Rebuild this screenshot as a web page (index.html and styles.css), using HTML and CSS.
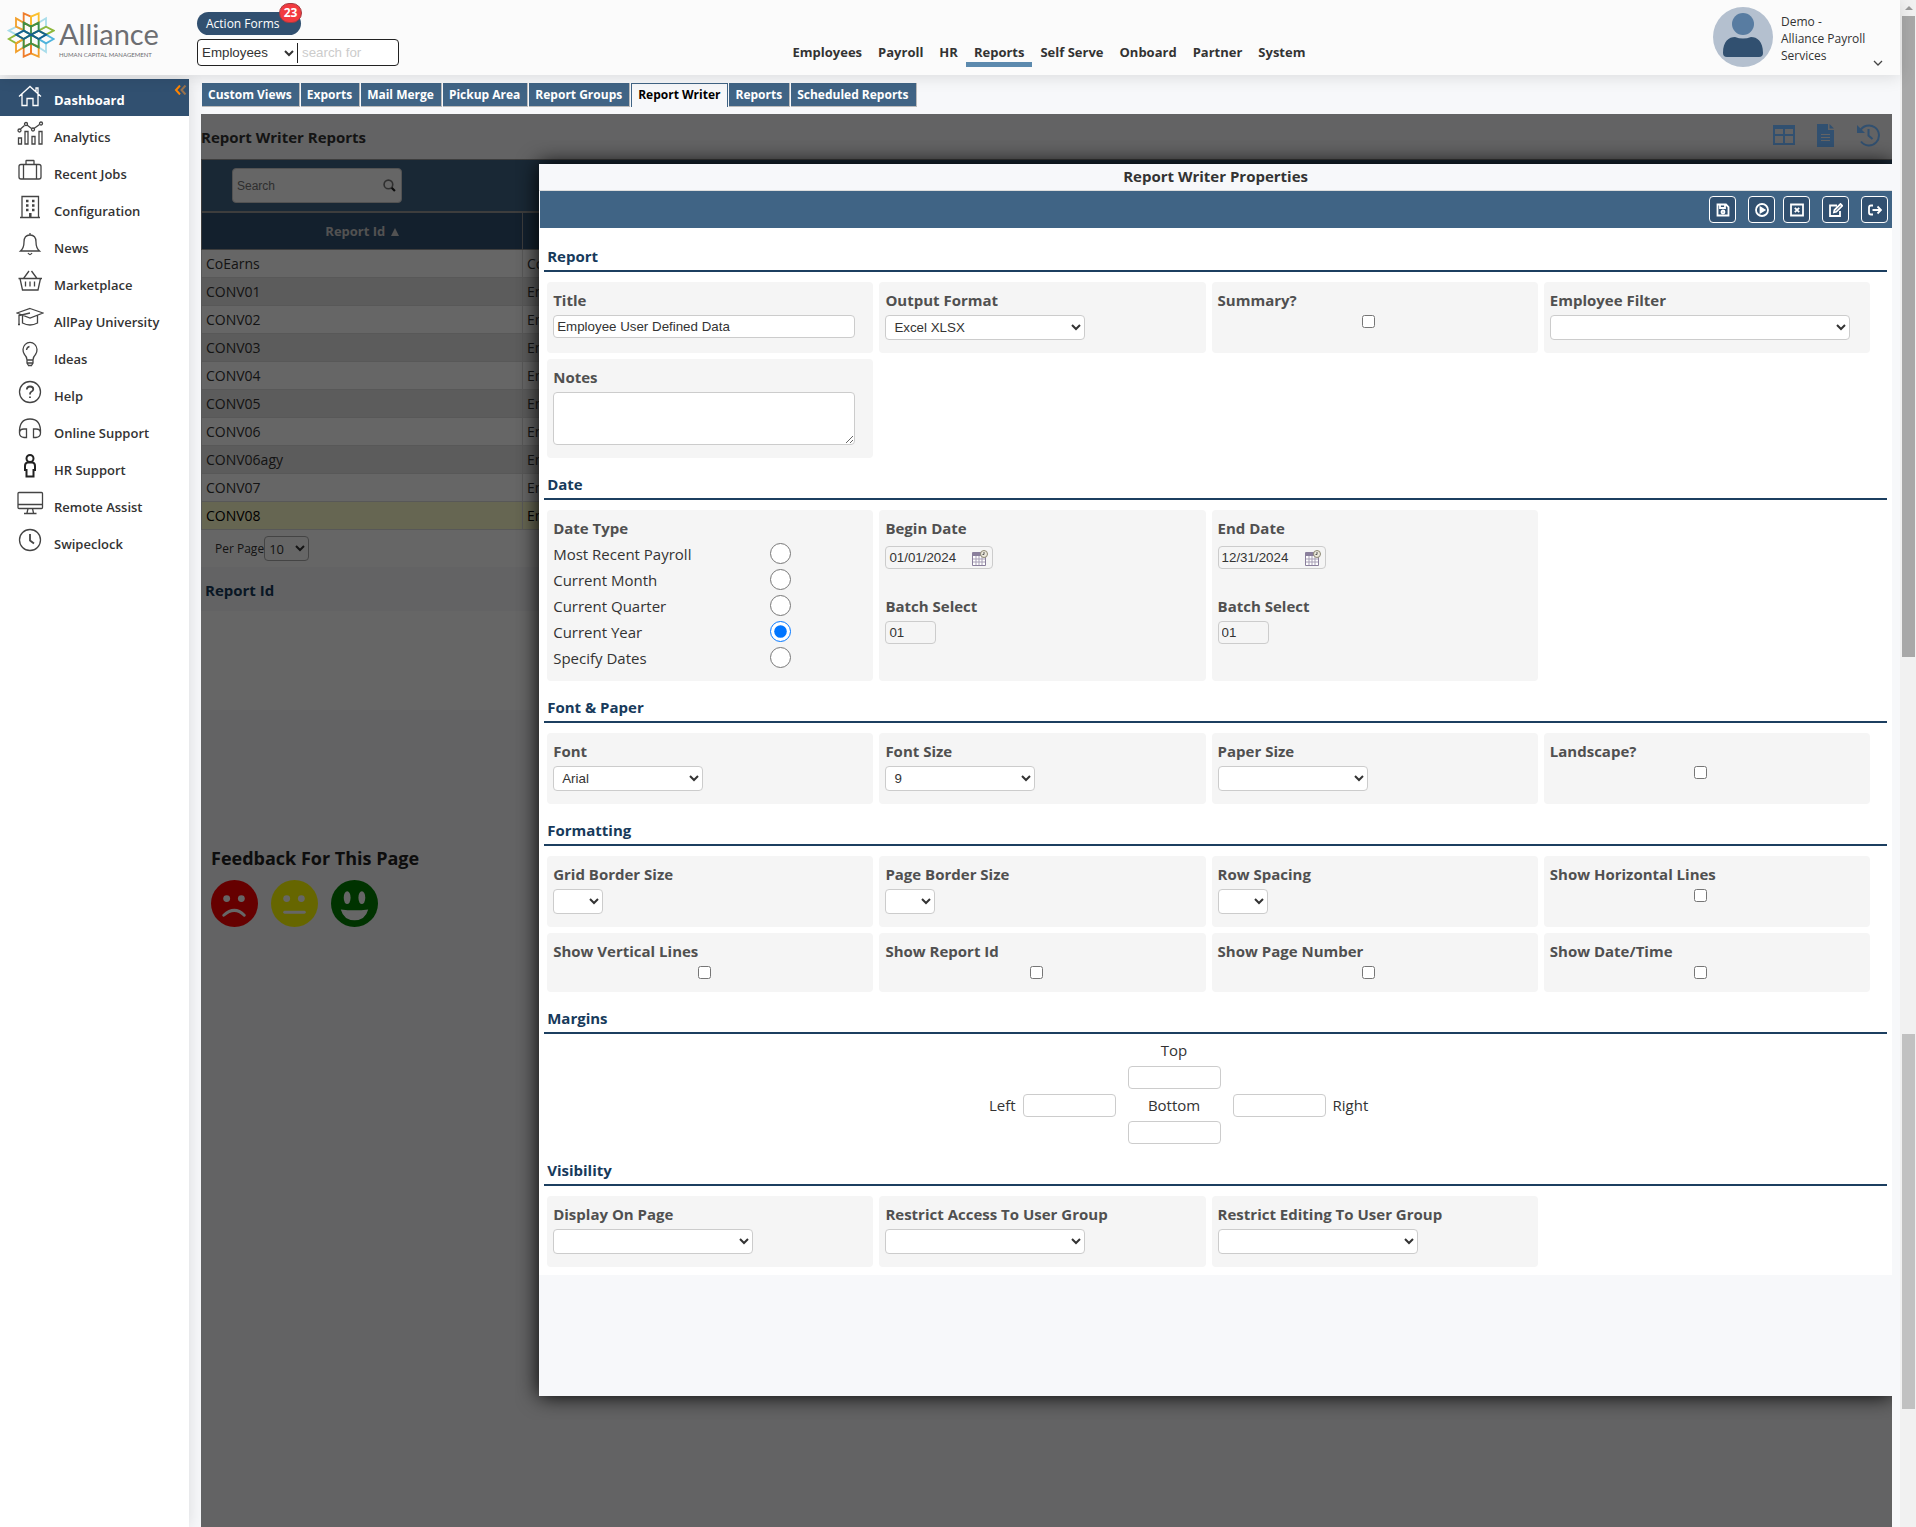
FILE: index.html
```html
<!DOCTYPE html>
<html lang="en">
<head>
<meta charset="utf-8">
<title>Report Writer Properties</title>
<link rel="stylesheet" href="styles.css">
</head>
<body>
<div class="window">
<div class="app">
  <header class="topbar">
    <a class="logo" href="#" aria-label="Alliance Human Capital Management">
      <svg class="logo-mark" viewBox="20 36 144 138" fill="none" stroke-width="5.500">
        <path stroke="#a9ddeb" d="M25 92L48 80 70 92 48 104ZM137 55L115 68V90L137 80ZM137 156L115 142V117L137 130Z"/>
        <path stroke="#8fb93c" d="M25 117L48 104 70 117 48 130ZM160 92L137 80 115 92 137 104Z"/>
        <path stroke="#4fb3dc" d="M160 117L137 104 115 117 137 130Z"/>
        <path stroke="#f2a02c" d="M47 55L70 68V90L47 80ZM47 156L70 142V117L47 130ZM92 160L115 170V140L92 130Z"/>
        <path stroke="#ef7d2b" d="M70 40L92 50V80L70 68ZM70 170L92 160V130L70 140Z"/>
        <path stroke="#fbc02d" d="M92 50L115 40V68L92 80Z"/>
        <path stroke="#3f8f45" d="M70 68L92 80V104L70 92ZM115 68L92 80V104L115 92ZM70 142L92 130V104L70 117ZM115 142L92 130V104L115 117Z"/>
        <path stroke="#14608f" d="M48 104L70 92 92 104 70 117ZM137 104L115 92 92 104 115 117Z"/>
      </svg>
      <span class="logo-text"><span class="logo-name">Alliance</span><span class="logo-tag">HUMAN CAPITAL MANAGEMENT</span></span>
    </a>
    <div class="quick">
      <button class="action-forms" type="button">Action Forms<span class="badge">23</span></button>
      <div class="quick-search">
        <select aria-label="Search in"><option>Employees</option></select>
        <input type="text" placeholder="search for" aria-label="Search for">
      </div>
    </div>
    <nav class="mainnav">
      <a href="#">Employees</a><a href="#">Payroll</a><a href="#">HR</a><a href="#" class="current">Reports</a><a href="#">Self Serve</a><a href="#">Onboard</a><a href="#">Partner</a><a href="#">System</a>
    </nav>
    <div class="account">
      <svg class="avatar" viewBox="0 0 60 60"><circle cx="30" cy="30" r="30" fill="#b4c0cf"/><circle cx="30" cy="17" r="11" fill="#587ca1"/><path d="M10 46C10 34 16 30 22 30Q30 33 38 30C44 30 50 34 50 46Q50 50 46 50H14Q10 50 10 46Z" fill="#315070"/></svg>
      <span class="account-name">Demo -<br>Alliance Payroll<br>Services</span>
      <svg class="account-caret" viewBox="0 0 10 6" fill="none" stroke="#444" stroke-width="1.3"><path d="M1 1L5 5 9 1"/></svg>
    </div>
  </header>

  <div class="columns">
    <aside class="sidebar">
      <a href="#" class="current">
        <svg viewBox="0 0 28 28"><path d="M3 14.500L14 4.500 25 14.500M6 12V23.500H11V16.500H17V23.500H22V12M20 9.500V6H22V11"/></svg><span>Dashboard</span>
        <svg class="collapse" viewBox="0 0 12 10"><path d="M5.500 .5L1.500 5 5.500 9.500" stroke="#ff8400"/><path d="M11 .5L7 5 11 9.500" stroke="#9a724d"/></svg>
      </a>
      <a href="#"><svg viewBox="0 0 28 28"><path d="M2.500 19H5.500V25H2.500ZM9 12.500H12V25H9ZM16 17.500H19V25H16ZM23 12.500H26V25H23ZM4.500 10L8.500 6.500M11 6L15.500 9.500M18 9.500L23.500 5.500"/><circle cx="3.500" cy="11.500" r="1.500"/><circle cx="10" cy="5" r="1.500"/><circle cx="17" cy="10.500" r="1.500"/><circle cx="25" cy="4.500" r="1.500"/></svg><span>Analytics</span></a>
      <a href="#"><svg viewBox="0 0 28 28"><rect x="3" y="8.500" width="22" height="14.500" rx="2"/><path d="M10 8.500V5Q10 4.500 10.500 4.500H17.500Q18 4.500 18 5V8.500M7.500 8.500V23M20.500 8.500V23"/></svg><span>Recent Jobs</span></a>
      <a href="#"><svg viewBox="0 0 28 28"><path d="M4 24.500H24M6 24.500V3.500H22.500V24.500"/><path stroke-width="2.500" d="M10 8H12.500M16 8H18.500M10 12.500H12.500M16 12.500H18.500M10 17H12.500M16 17H18.500M14.300 20V24"/></svg><span>Configuration</span></a>
      <a href="#"><svg viewBox="0 0 28 28"><path d="M14 3V5M4.500 21Q8 18 8 12 8 5 14 5 20 5 20 12 20 18 23.500 21ZM12 23Q14 26 16 23"/></svg><span>News</span></a>
      <a href="#"><svg viewBox="0 0 28 28"><path d="M2.500 11.500H26M4 11.500L6.500 23H22L24.500 11.500M7.500 11.500L13 4M21 11.500L15.500 4M9.500 14.500V19.500M14 14.500V19.500M18.500 14.500V19.500"/></svg><span>Marketplace</span></a>
      <a href="#"><svg viewBox="0 0 28 28"><path d="M14 4.500L27 9 14 14 1 9ZM6.500 11.500V19Q14 23 21.500 19V11.500M14 9L3 11.500V20M2 20.500H4"/></svg><span>AllPay University</span></a>
      <a href="#"><svg viewBox="0 0 28 28"><path d="M11 19Q11 16 8.500 13.500A7 7.500 0 1 1 19.500 13.500Q17 16 17 19ZM11 22H17M12 24.500H16M11 19V22L12.500 24.500M17 19V22L15.500 24.500M10.500 9Q11 6 13.500 5.500"/></svg><span>Ideas</span></a>
      <a href="#"><svg viewBox="0 0 28 28"><circle cx="14" cy="14" r="10.500"/><path stroke-width="1.800" d="M10.800 11.500Q11 8.500 14 8.500 17.300 8.500 17.300 11.300 17.300 13 15 14 14 14.600 14 16.500M14 18.500V20"/></svg><span>Help</span></a>
      <a href="#"><svg viewBox="0 0 28 28"><path d="M3.500 18Q3 4 14 4 25 4 24.500 18M10.500 14V22.500H8Q3.500 22 3.500 18 3.500 14 8 14ZM17.500 14V22.500H20Q24.500 22 24.500 18 24.500 14 20 14Z"/></svg><span>Online Support</span></a>
      <a href="#"><svg viewBox="0 0 28 28" class="bold"><circle cx="14" cy="6.500" r="3.500"/><path d="M11.500 10.500H16.500Q19 11 19 14V18H17.500V24.500H10.500V18H9V14Q9 11 11.500 10.500Z"/></svg><span>HR Support</span></a>
      <a href="#"><svg viewBox="0 0 28 28"><rect x="2" y="3.500" width="24.500" height="16" rx="1"/><path d="M2 15.500H26.500M12 19.500L11 24M16.500 19.500L17.500 24M8 24.500H20.500"/></svg><span>Remote Assist</span></a>
      <a href="#"><svg viewBox="0 0 28 28"><circle cx="14" cy="14" r="10.500"/><path stroke-width="1.800" d="M14 8V14.500L18 17.500"/></svg><span>Swipeclock</span></a>
    </aside>

    <main class="main">
      <nav class="tabs">
        <a href="#">Custom Views</a><a href="#">Exports</a><a href="#">Mail Merge</a><a href="#">Pickup Area</a><a href="#">Report Groups</a><a href="#" class="current">Report Writer</a><a href="#">Reports</a><a href="#">Scheduled Reports</a>
      </nav>

      <div class="stage">
        <div class="page-head">
          <h1>Report Writer Reports</h1>
          <div class="page-tools">
            <button type="button" aria-label="Grid"><svg viewBox="0 0 24 24"><path fill="none" stroke="#315070" stroke-width="2" d="M2 3H22V21H2ZM2 12H22M12 4V21"/><path fill="#315070" d="M1 2H23V6H1Z"/></svg></button>
            <button type="button" aria-label="Document"><svg viewBox="0 0 24 24"><path fill="#315070" d="M3 1H14V7H20V24H3ZM15.500 1L20 5.500H15.500Z"/><path stroke="#636364" d="M7 11.500H16M7 14.500H16M7 17.500H16"/></svg></button>
            <button type="button" aria-label="History"><svg viewBox="0 0 24 24" fill="none" stroke="#315070" stroke-width="2"><path d="M4 8A10 10 0 1 1 5 18.500M12.500 6V12.500L16.500 16"/><path fill="#315070" stroke="none" d="M1 2V10H9Z"/></svg></button>
          </div>
        </div>
        <div class="grid-toolbar">
          <div class="grid-search"><input type="text" placeholder="Search" aria-label="Search reports"><svg viewBox="0 0 12 12" fill="none"><circle cx="5" cy="5" r="4" stroke="#777" stroke-width="1.500"/><path d="M8 8L11 11" stroke="#222" stroke-width="2"/></svg></div>
        </div>
        <table class="reports">
          <thead><tr><th class="col-id">Report Id <svg viewBox="0 0 8 8"><path d="M4 0L8 8H0Z" fill="#ccc"/></svg></th><th></th></tr></thead>
          <tbody>
            <tr><td>CoEarns</td><td>Co</td></tr>
            <tr><td>CONV01</td><td>Em</td></tr>
            <tr><td>CONV02</td><td>Em</td></tr>
            <tr><td>CONV03</td><td>Em</td></tr>
            <tr><td>CONV04</td><td>Em</td></tr>
            <tr><td>CONV05</td><td>Em</td></tr>
            <tr><td>CONV06</td><td>Em</td></tr>
            <tr><td>CONV06agy</td><td>Em</td></tr>
            <tr><td>CONV07</td><td>Em</td></tr>
            <tr class="selected"><td>CONV08</td><td>Em</td></tr>
          </tbody>
        </table>
        <div class="pager"><label for="per-page">Per Page</label><select id="per-page"><option>10</option></select></div>
        <h2 class="detail-head">Report Id</h2>
        <div class="detail-body"></div>
        <section class="feedback">
          <h2>Feedback For This Page</h2>
          <div class="faces">
            <button type="button" aria-label="Unhappy"><svg viewBox="0 0 48 48"><circle cx="24" cy="24" r="24" fill="#f00"/><g fill="#fff"><circle cx="16" cy="19" r="3.500"/><circle cx="31" cy="19" r="3.500"/></g><path d="M13 36Q24 26 34 36" fill="none" stroke="#fff" stroke-width="3" stroke-linecap="round"/></svg></button>
            <button type="button" aria-label="Neutral"><svg viewBox="0 0 48 48"><circle cx="24" cy="24" r="24" fill="#ff0"/><g fill="#fff"><circle cx="16" cy="19" r="3.500"/><circle cx="31" cy="19" r="3.500"/></g><path d="M14 33H34" stroke="#fff" stroke-width="3" stroke-linecap="round"/></svg></button>
            <button type="button" aria-label="Happy"><svg viewBox="0 0 48 48"><circle cx="24" cy="24" r="24" fill="#008000"/><g fill="#fff"><ellipse cx="16.500" cy="18" rx="3.500" ry="6.500"/><ellipse cx="31.500" cy="18" rx="3.500" ry="6.500"/><path d="M10 30Q24 32 38 30 35 41 24 41 13 41 10 30Z"/></g></svg></button>
          </div>
        </section>

        <div class="shade"></div>

        <form class="dialog" role="dialog" aria-labelledby="dialog-title">
          <h2 class="dialog-title" id="dialog-title">Report Writer Properties</h2>
          <div class="dialog-bar">
            <button type="button" aria-label="Save"><svg viewBox="0 0 14 14"><path d="M1.500 1.500H10L12.500 4V12.500H1.500ZM4 2V5H9V2"/><circle cx="7" cy="9" r="1.500"/></svg></button>
            <button type="button" aria-label="Run"><svg viewBox="0 0 14 14"><circle cx="7" cy="7" r="6"/><path d="M5.500 4.500L9.500 7 5.500 9.500Z" fill="#fff"/></svg></button>
            <button type="button" class="tight" aria-label="Delete"><svg viewBox="0 0 14 14"><path d="M1 1.500H13V12.500H1ZM4.800 4.800L9.200 9.200M9.200 4.800L4.800 9.200"/></svg></button>
            <button type="button" aria-label="Edit"><svg viewBox="0 0 14 14"><path d="M8 2.500H1V13H11V8M5 9.300L5.500 7 11.500 1 13.300 2.800 7.300 8.800Z"/></svg></button>
            <button type="button" aria-label="Exit"><svg viewBox="0 0 14 14"><path d="M5 2.500H3Q1 2.500 1 4.500V9.500Q1 11.500 3 11.500H5M4.500 7H13M9.500 3.500L13 7 9.500 10.500"/></svg></button>
          </div>

          <div class="dialog-body">
            <h3>Report</h3>
            <div class="cards">
              <div class="card"><label for="title">Title</label><input class="text" id="title" type="text" value="Employee User Defined Data"></div>
              <div class="card"><label for="format">Output Format</label><select class="w-200" id="format"><option>Excel XLSX</option></select></div>
              <div class="card"><label for="summary">Summary?</label><input id="summary" type="checkbox"></div>
              <div class="card"><label for="filter">Employee Filter</label><select class="w-300" id="filter"><option></option></select></div>
              <div class="card"><label for="notes">Notes</label><textarea id="notes"></textarea></div>
            </div>

            <h3>Date</h3>
            <div class="cards">
              <fieldset class="card">
                <legend>Date Type</legend>
                <label class="radio">Most Recent Payroll<input type="radio" name="datetype"></label>
                <label class="radio">Current Month<input type="radio" name="datetype"></label>
                <label class="radio">Current Quarter<input type="radio" name="datetype"></label>
                <label class="radio">Current Year<input type="radio" name="datetype" checked></label>
                <label class="radio">Specify Dates<input type="radio" name="datetype"></label>
              </fieldset>
              <div class="card dates">
                <label for="begin">Begin Date</label>
                <div class="date"><input id="begin" type="text" value="01/01/2024"><svg viewBox="0 0 16 16"><path d="M.5 2.500H13.500V15.500H.5Z" fill="#fff" stroke="#8a7f9c"/><path d="M1 3H13V6H1Z" fill="#8a7f9c"/><path d="M1 9H13M1 12H13M4 6V15M7 6V15M10 6V15" stroke="#a79fb5"/><circle cx="12" cy="4" r="3.500" fill="#ece9dc" stroke="#8d8873"/><path d="M12 2V4.500H10.500" stroke="#555" fill="none"/></svg></div>
                <label for="batch1">Batch Select</label><input class="text batch" id="batch1" type="text" value="01">
              </div>
              <div class="card dates">
                <label for="end">End Date</label>
                <div class="date"><input id="end" type="text" value="12/31/2024"><svg viewBox="0 0 16 16"><path d="M.5 2.500H13.500V15.500H.5Z" fill="#fff" stroke="#8a7f9c"/><path d="M1 3H13V6H1Z" fill="#8a7f9c"/><path d="M1 9H13M1 12H13M4 6V15M7 6V15M10 6V15" stroke="#a79fb5"/><circle cx="12" cy="4" r="3.500" fill="#ece9dc" stroke="#8d8873"/><path d="M12 2V4.500H10.500" stroke="#555" fill="none"/></svg></div>
                <label for="batch2">Batch Select</label><input class="text batch" id="batch2" type="text" value="01">
              </div>
            </div>

            <h3>Font &amp; Paper</h3>
            <div class="cards">
              <div class="card"><label for="font">Font</label><select class="w-150" id="font"><option>Arial</option></select></div>
              <div class="card"><label for="size">Font Size</label><select class="w-150" id="size"><option>9</option></select></div>
              <div class="card"><label for="paper">Paper Size</label><select class="w-150" id="paper"><option></option></select></div>
              <div class="card"><label for="landscape">Landscape?</label><input id="landscape" type="checkbox"></div>
            </div>

            <h3>Formatting</h3>
            <div class="cards">
              <div class="card"><label for="gridborder">Grid Border Size</label><select class="w-50" id="gridborder"><option></option></select></div>
              <div class="card"><label for="pageborder">Page Border Size</label><select class="w-50" id="pageborder"><option></option></select></div>
              <div class="card"><label for="rowspacing">Row Spacing</label><select class="w-50" id="rowspacing"><option></option></select></div>
              <div class="card"><label for="hlines">Show Horizontal Lines</label><input id="hlines" type="checkbox"></div>
              <div class="card"><label for="vlines">Show Vertical Lines</label><input id="vlines" type="checkbox"></div>
              <div class="card"><label for="showid">Show Report Id</label><input id="showid" type="checkbox"></div>
              <div class="card"><label for="pagenum">Show Page Number</label><input id="pagenum" type="checkbox"></div>
              <div class="card"><label for="datetime">Show Date/Time</label><input id="datetime" type="checkbox"></div>
            </div>

            <h3>Margins</h3>
            <div class="margins">
              <label for="m-left">Left</label><input class="text" id="m-left" type="text">
              <div class="margins-mid">
                <label for="m-top">Top</label><input class="text" id="m-top" type="text">
                <label for="m-bottom">Bottom</label><input class="text" id="m-bottom" type="text">
              </div>
              <input class="text" id="m-right" type="text"><label for="m-right">Right</label>
            </div>

            <h3>Visibility</h3>
            <div class="cards">
              <div class="card"><label for="display">Display On Page</label><select class="w-200" id="display"><option></option></select></div>
              <div class="card"><label for="access">Restrict Access To User Group</label><select class="w-200" id="access"><option></option></select></div>
              <div class="card"><label for="editing">Restrict Editing To User Group</label><select class="w-200" id="editing"><option></option></select></div>
            </div>
          </div>
        </form>
      </div>
    </main>
  </div>
</div>
<div class="scrollbar" aria-hidden="true">
  <div class="track upper"><span class="arrow"></span><span class="thumb"></span></div>
  <div class="track lower"><span class="thumb"></span></div>
</div>
</div>
</body>
</html>
```
FILE: styles.css
```css
* { box-sizing: border-box; }
body { margin: 0; background: #f7f8fa; color: #333; font-family: "Open Sans", "Noto Sans", sans-serif; font-size: 14px; }
h1, h2, h3 { margin: 0; font-weight: 700; }
a { color: inherit; text-decoration: none; }
button { font-family: inherit; }
input, select, textarea { font-family: "Liberation Sans", Arial, sans-serif; color: #333; }

.window { display: flex; min-height: 100vh; }
.app { flex: 1; min-width: 0; display: flex; flex-direction: column; }

/* header */
.topbar { display: flex; height: 75px; background: #fbfbfb; box-shadow: 0 2px 16px rgba(0, 0, 0, .12); position: relative; z-index: 2; }
.logo { width: 197px; display: flex; padding: 12px 0 0 7px; gap: 4px; }
.logo-mark { width: 48px; height: 46px; }
.logo-text { display: flex; flex-direction: column; color: #6d6e72; font-family: Lato, sans-serif; }
.logo-name { font-size: 29px; line-height: 36px; padding-top: 4px; }
.logo-tag { font-size: 6px; line-height: 6px; white-space: nowrap; }
.quick { width: 202px; padding-top: 12px; }
.action-forms { position: relative; display: block; width: 104px; height: 23px; margin-bottom: 4px; padding: 0 0 0 9px; border: 0; border-radius: 12px; background: #315070; color: #fff; font-size: 12px; text-align: left; }
.badge { position: absolute; top: -9px; right: -1px; width: 23px; height: 20px; border: 1px solid #a33a40; border-radius: 10px; background: #f23a3f; font-weight: 700; line-height: 18px; text-align: center; }
.quick-search { display: flex; align-items: center; height: 27px; border: 1px solid #222; border-radius: 4px; background: #fff; }
.quick-search select { width: 100px; height: 20px; padding: 0; border: 0; border-right: 1px solid #222; border-radius: 0; background: none; }
.quick-search input { width: 96px; padding: 0 4px; border: 0; background: none; outline: 0; }
.quick-search input::placeholder { color: #ccc; }
.mainnav { flex: 1; display: flex; justify-content: center; align-items: flex-start; padding-top: 42px; }
.mainnav a { padding: 0 8px; font-weight: 700; font-size: 13px; line-height: 20px; height: 25px; }
.mainnav .current { border-bottom: 5px solid #5c8aae; }
.account { width: 201px; display: flex; padding: 7px 17px 0 14px; }
.avatar { width: 60px; height: 60px; margin-right: 8px; }
.account-name { flex: 1; padding-top: 6px; font-size: 12px; line-height: 17px; white-space: nowrap; }
.account-caret { width: 10px; height: 6px; margin-top: 53px; }

/* sidebar */
.columns { flex: 1; display: flex; }
.sidebar { width: 189px; margin-top: 4px; background: #fff; box-shadow: 0 0 16px rgba(0, 0, 0, .12); font-weight: 600; font-size: 13px; }
.sidebar a { display: flex; align-items: center; gap: 10px; height: 37px; padding-left: 16px; position: relative; }
.sidebar a > svg { width: 28px; height: 28px; margin-bottom: 3px; fill: none; stroke: #444; stroke-width: 1.3; }
.sidebar a > svg.bold { stroke-width: 2; stroke: #222; }
.sidebar span { padding-top: 4px; }
.sidebar .current { background: #315070; color: #fff; font-weight: 700; }
.sidebar .current > svg { stroke: #fff; }
.sidebar .current > .collapse { position: absolute; top: 6px; right: 2px; width: 13px; height: 10px; stroke-width: 2; }

/* tabs */
.main { flex: 1; min-width: 0; margin-left: 12px; display: flex; flex-direction: column; }
.tabs { display: flex; gap: 1px; padding: 7px 0 7px 1px; }
.tabs a { height: 24px; padding: 0 6px; border: 1px solid #bbb; border-width: 0 1px 1px 0; margin-top: 1px; background: #406485; color: #fff; font-size: 12px; font-weight: 700; line-height: 24px; }
.tabs a { padding: 0 7px 0 6px; }
.tabs .current { background: #f7f8fa; color: #000; border-color: #406485; border-width: 1px 1px 0; line-height: 22px; }

/* background page */
.stage { flex: 1; position: relative; margin-right: 8px; }
.page-head { display: flex; justify-content: space-between; height: 45px; line-height: 47px; }
.page-head h1 { font-size: 15px; }
.page-tools { position: relative; z-index: 2; display: flex; align-items: center; gap: 18px; padding: 0 12px 4px 0; }
.page-tools button { padding: 0; border: 0; background: none; height: 24px; }
.page-tools svg { width: 24px; height: 24px; }
.grid-toolbar { height: 53px; padding: 8px 30px; background: #406485; border: 1px solid #999; border-width: 1px 0 1px 1px; }
.grid-search { display: flex; align-items: center; width: 170px; height: 35px; padding: 0 5px 0 4px; border: 1px solid #ccc; border-radius: 4px; background: #fff; }
.grid-search input { flex: 1; min-width: 0; padding: 0; border: 0; font-size: 12px; background: none; }
.grid-search svg { width: 13px; height: 13px; }
.reports { width: 100%; border-collapse: collapse; table-layout: fixed; font-size: 14px; }
.reports th { height: 37px; padding: 0; background: #315070; color: #ccc; border: 1px solid #999; font-size: 13px; }
.reports th svg { width: 8px; height: 8px; margin-left: 2px; }
.reports .col-id { width: 321px; }
.reports td { height: 28px; padding: 0 4px; background: #fff; border: 1px solid #ddd; }
.reports tr:nth-child(even) td { background: #e6e6e6; }
.reports tr.selected:nth-child(even) td { background: #ffffcc; color: #000; }
.pager { display: flex; align-items: center; height: 37px; padding-left: 14px; background: #fff; font-size: 12px; }
.pager select { width: 45px; height: 25px; border: 1px solid #aaa; border-radius: 4px; background: #fff; font-family: inherit; font-size: 13px; }
.detail-head { height: 44px; padding-left: 4px; color: #173a5b; font-size: 15px; line-height: 46px; }
.detail-body { height: 99px; background: #fff; }
.feedback { padding: 136px 0 0 10px; }
.feedback h2 { font-size: 18px; line-height: 24px; color: #222; }
.faces { display: flex; gap: 13px; padding-top: 10px; }
.faces button { width: 47px; height: 47px; padding: 0; border: 0; background: none; }
.shade { position: absolute; inset: 0; z-index: 1; background: rgba(0, 0, 0, .6); }

/* properties dialog */
.dialog { position: absolute; z-index: 3; top: 50px; left: 20%; right: 0; padding-bottom: 121px; background: #f7f8fa; box-shadow: 0 0 20px #000; clip-path: inset(-24px 0 -24px -24px); }
.dialog-title { height: 27px; border-bottom: 1px solid #ddd; font-size: 15px; line-height: 24px; text-align: center; }
.dialog-bar { display: flex; justify-content: flex-end; align-items: center; gap: 12px; height: 37px; margin-left: 1px; padding-right: 4px; background: #406485; }
.dialog-bar button { display: grid; place-items: center; width: 27px; height: 27px; padding: 0; border: 1px solid #fff; border-radius: 4px; background: #315070; }
.dialog-bar .tight { margin-left: -4px; }
.dialog-bar svg { width: 14px; height: 14px; fill: none; stroke: #fff; stroke-width: 1.800; }
.dialog-body { padding: 2px 5px 8px; background: #fff; }
.dialog h3 { height: 42px; padding: 15px 3px 3px; border-bottom: 2px solid #1c3f60; color: #173a5b; font-size: 15px; line-height: 22px; }
.cards { display: grid; grid-template-columns: repeat(4, 1fr); gap: 6px; padding: 10px 17px 0 3px; }
.card { min-width: 0; margin: 0; padding: 8px 18px 13px 6px; border: 0; border-radius: 4px; background: #f5f5f5; }
.card > label, .card legend { display: block; height: 20px; margin-bottom: 5px; padding: 0; color: #505050; font-size: 15px; font-weight: 700; line-height: 20px; white-space: nowrap; }
.card legend { float: left; width: 100%; margin-bottom: 3px; }
fieldset.card { padding-bottom: 10px; }
.card > .radio { clear: both; display: flex; align-items: center; height: 26px; margin: 0; color: #333; font-weight: 400; font-size: 15px; }
.radio input { width: 21px; height: 21px; margin: 0 64px 2px auto; }
.card input[type="checkbox"] { display: block; width: 13px; height: 13px; margin: 0 auto; }
.text, textarea, .dialog select { display: block; border: 1px solid #ccc; border-radius: 4px; background: #fff; }
.text { width: 100%; height: 23px; padding: 0 3px; }
.dialog select { height: 25px; padding: 0 4px; }
textarea { width: 100%; height: 53px; }
.w-50 { width: 50px; }
.w-150 { width: 150px; }
.w-200 { width: 200px; }
.w-300 { width: 300px; max-width: 100%; }
.date { display: flex; align-items: center; width: 108px; height: 23px; margin: 8px 0 27px; padding: 0 4px 0 3px; border: 1px solid #ccc; border-radius: 4px; }
.date input { flex: 1; min-width: 0; padding: 0; border: 0; background: none; }
.date svg { width: 16px; height: 16px; }
.dates .batch { width: 51px; background: none; }
.margins { display: flex; justify-content: center; align-items: center; gap: 7px; padding: 3px 74px 0 0; font-size: 15px; line-height: 26px; }
.margins .text { width: 93px; }
.margins > .text, .margins > label { margin-top: 29px; }
.margins-mid { display: grid; gap: 3px; justify-items: center; margin: 0 5px; }

/* scroll bars */
.scrollbar { width: 16px; display: flex; flex-direction: column; background: #f1f1f1; padding: 0 1px 0 2px; }
.track { display: flex; flex-direction: column; align-items: center; }
.upper { flex: 1034; }
.lower { flex: 493; }
.arrow { margin: 6px 0; border: 4px solid transparent; border-top: 0; border-bottom-color: #999; }
.thumb { width: 100%; background: #c1c1c1; }
.upper .thumb { flex: 0 0 62%; background: #a8a8a8; }
.lower .thumb { flex: 0 0 76%; }
```
